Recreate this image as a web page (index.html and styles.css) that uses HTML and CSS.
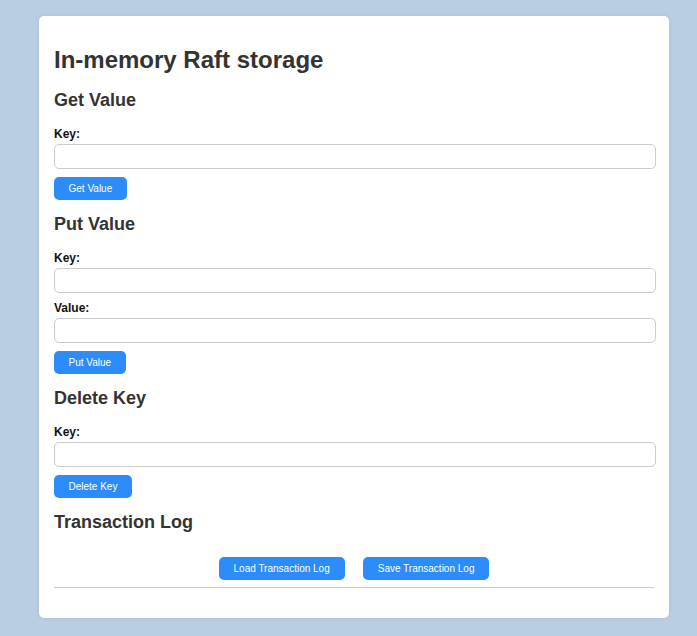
FILE: index.html
```html
<!DOCTYPE html>
<html>
<head>
<meta charset="utf-8">
<link rel="stylesheet" href="styles.css">
</head>
<body>
<div class="card">
  <h1 class="title">In-memory Raft storage</h1>

  <h2 class="section">Get Value</h2>
  <label class="lbl">Key:</label>
  <input class="field" type="text">
  <button class="btn">Get Value</button>

  <h2 class="section">Put Value</h2>
  <label class="lbl">Key:</label>
  <input class="field" type="text">
  <label class="lbl">Value:</label>
  <input class="field" type="text">
  <button class="btn">Put Value</button>

  <h2 class="section">Delete Key</h2>
  <label class="lbl">Key:</label>
  <input class="field" type="text">
  <button class="btn">Delete Key</button>

  <h2 class="section">Transaction Log</h2>
  <div class="log-actions">
    <button class="btn">Load Transaction Log</button>
    <button class="btn">Save Transaction Log</button>
  </div>
  <hr class="rule">
</div>
</body>
</html>
```

FILE: styles.css
```css
html, body {
  margin: 0;
  padding: 0;
}
body {
  background: #b9cee3;
  font-family: "Liberation Sans", Arial, sans-serif;
  padding: 16px 28px 18px 39px;
  min-height: 636px;
  box-sizing: border-box;
}
.card {
  width: 630px;
  box-sizing: border-box;
  background: #fff;
  border-radius: 5px;
  padding: 15px 15px 30px 15px;
  box-shadow: 0 0 4px rgba(0,0,0,0.08);
}
.title {
  font-size: 24px;
  line-height: 28px;
  margin: 15px 0 0 0;
  color: #333;
  font-weight: bold;
}
.section {
  font-size: 18px;
  line-height: 22px;
  margin: 13px 0 16px 0;
  color: #333;
  font-weight: bold;
}
.title + .section {
  margin-top: 15px;
}
.lbl {
  display: block;
  font-size: 12px;
  line-height: 15px;
  font-weight: bold;
  color: #111;
  margin-bottom: 2px;
}
.field {
  display: block;
  width: 602px;
  height: 25px;
  box-sizing: border-box;
  border: 1px solid #ccc;
  border-radius: 5px;
  margin: 0;
  padding: 4px 8px;
  font-size: 12px;
  font-family: "Liberation Sans", Arial, sans-serif;
}
.btn {
  display: block;
  height: 23px;
  box-sizing: border-box;
  padding: 0 14.5px;
  margin-top: 8px;
  background: #2c8dfa;
  color: #fff;
  border: none;
  border-radius: 5px;
  font-size: 10px;
  font-family: "Liberation Sans", Arial, sans-serif;
}
.field + .lbl {
  margin-top: 8px;
}
.log-actions {
  display: flex;
  justify-content: center;
  gap: 18px;
  margin-top: 24px;
}
.log-actions .btn {
  margin-top: 0;
  padding: 0 15px;
}
.rule {
  border: none;
  border-top: 1px solid #ccc;
  margin: 7px 0 0 0;
}
```
